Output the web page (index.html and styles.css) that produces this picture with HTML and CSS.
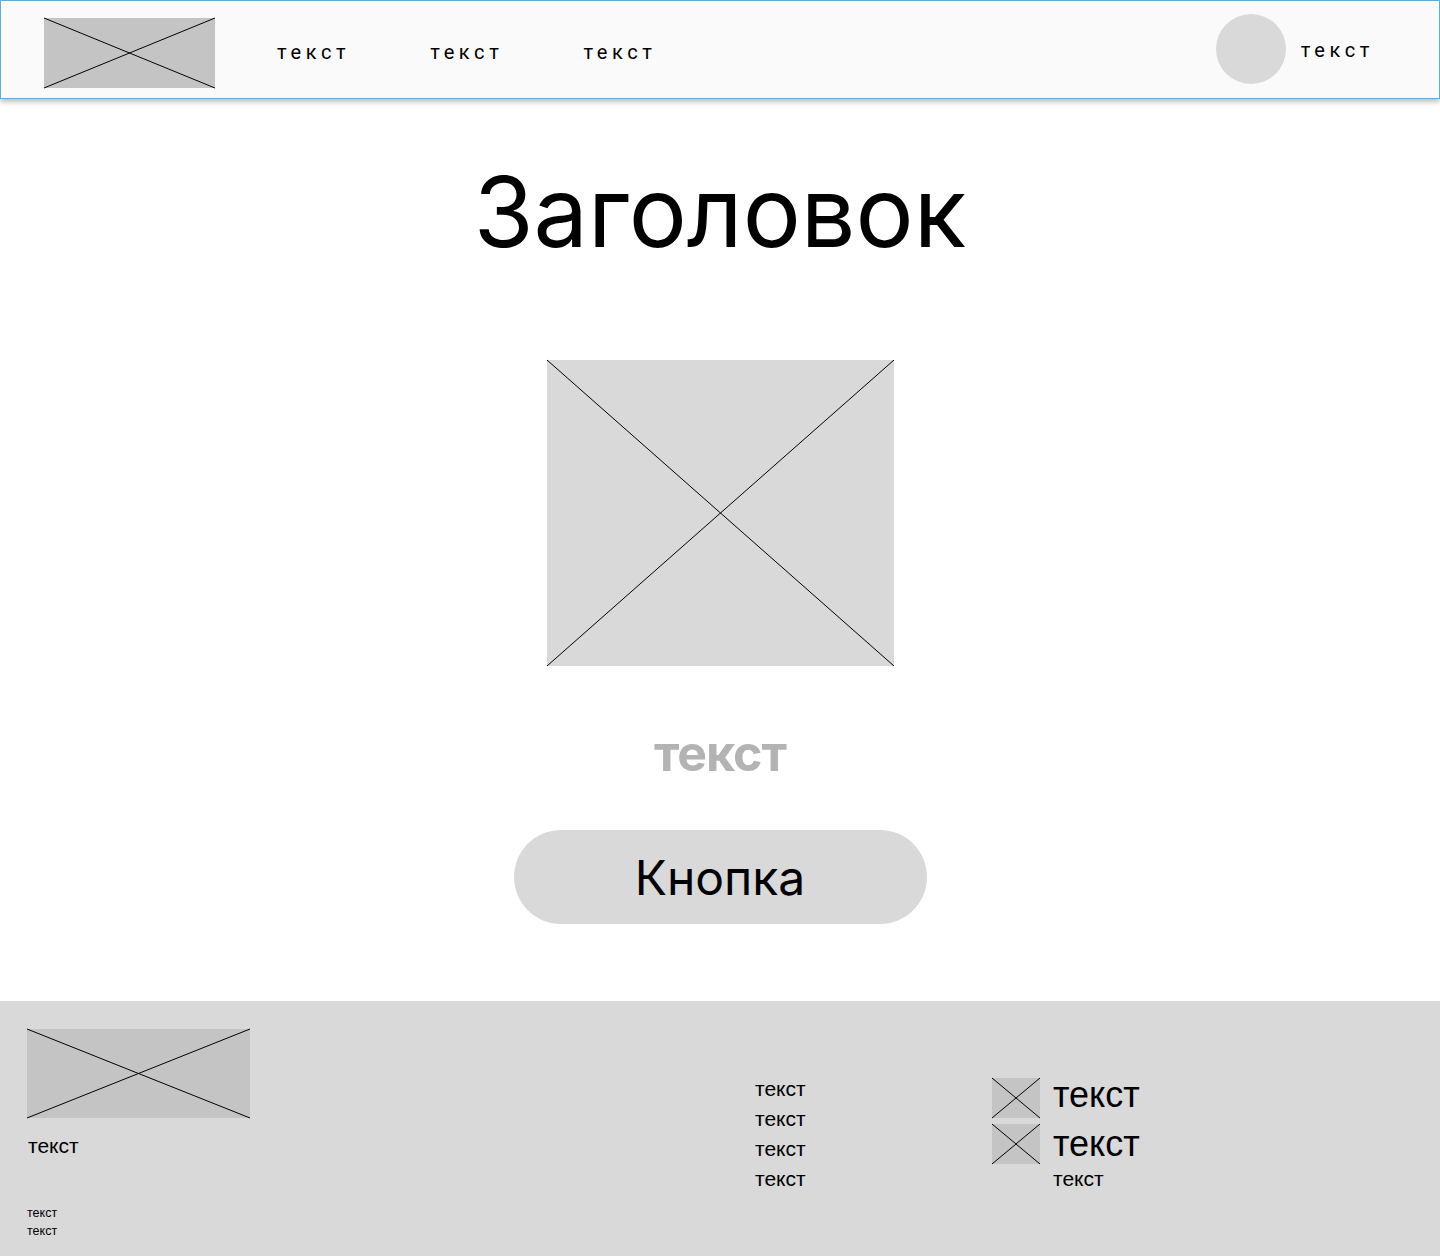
FILE: index.html
```html
<!DOCTYPE html>
<html lang="ru">
<head>
<meta charset="utf-8">
<title>Wireframe</title>
<link rel="stylesheet" href="styles.css">
</head>
<body>
<header class="topbar">
  <div class="ph ph-logo">
    <svg viewBox="0 0 100 100" preserveAspectRatio="none"><line x1="0" y1="0" x2="100" y2="100"/><line x1="0" y1="100" x2="100" y2="0"/></svg>
  </div>
  <nav class="nav">
    <a class="nav-link">текст</a>
    <a class="nav-link">текст</a>
    <a class="nav-link">текст</a>
  </nav>
  <div class="user">
    <span class="avatar"></span>
    <span class="user-name">текст</span>
  </div>
</header>

<main class="hero">
  <h1 class="hero-title">Заголовок</h1>
  <div class="ph ph-image">
    <svg viewBox="0 0 100 100" preserveAspectRatio="none"><line x1="0" y1="0" x2="100" y2="100"/><line x1="0" y1="100" x2="100" y2="0"/></svg>
  </div>
  <p class="hero-sub">текст</p>
  <button class="btn">Кнопка</button>
</main>

<footer class="footer">
  <div class="footer-brand">
    <div class="ph ph-flogo">
      <svg viewBox="0 0 100 100" preserveAspectRatio="none"><line x1="0" y1="0" x2="100" y2="100"/><line x1="0" y1="100" x2="100" y2="0"/></svg>
    </div>
    <p class="footer-tag">текст</p>
    <div class="footer-small">
      <span>текст</span>
      <span>текст</span>
    </div>
  </div>
  <ul class="footer-links">
    <li>текст</li>
    <li>текст</li>
    <li>текст</li>
    <li>текст</li>
  </ul>
  <div class="footer-contacts">
    <div class="contact contact-first">
      <div class="ph ph-icon">
        <svg viewBox="0 0 100 100" preserveAspectRatio="none"><line x1="0" y1="0" x2="100" y2="100"/><line x1="0" y1="100" x2="100" y2="0"/></svg>
      </div>
      <span class="contact-text">текст</span>
    </div>
    <div class="contact">
      <div class="ph ph-icon">
        <svg viewBox="0 0 100 100" preserveAspectRatio="none"><line x1="0" y1="0" x2="100" y2="100"/><line x1="0" y1="100" x2="100" y2="0"/></svg>
      </div>
      <span class="contact-text">текст</span>
    </div>
    <span class="contact-note">текст</span>
  </div>
</footer>
</body>
</html>
```

FILE: styles.css
```css
* { box-sizing: border-box; }

html, body {
  margin: 0;
  padding: 0;
  background: #ffffff;
  color: #000000;
  font-family: Inter, "Liberation Sans", sans-serif;
}

body {
  width: 1440px;
  min-height: 1256px;
  display: flex;
  flex-direction: column;
}

/* placeholder boxes */
.ph {
  position: relative;
  flex: none;
}
.ph svg {
  display: block;
  width: 100%;
  height: 100%;
  overflow: visible;
}
.ph line {
  stroke: #000;
  stroke-width: 1;
  vector-effect: non-scaling-stroke;
}

/* header */
.topbar {
  height: 99px;
  display: flex;
  align-items: flex-start;
  padding: 0 65px 0 43px;
  background: #fafafa;
  border: 1px solid #5eaecf;
  box-shadow: 0 3px 5px rgba(0, 0, 0, 0.25);
  position: relative;
  z-index: 1;
}
.ph-logo {
  margin-top: 17px;
  width: 171px;
  height: 70px;
  background: #c4c4c4;
}
.nav {
  display: flex;
  gap: 80px;
  margin-left: 62px;
  margin-top: 39px;
}
.nav-link,
.user-name {
  font-family: Roboto, "Liberation Sans", sans-serif;
  font-size: 20px;
  line-height: normal;
  letter-spacing: 4.6px;
  color: #000;
}
.user {
  margin-left: auto;
  display: flex;
  align-items: flex-start;
  gap: 15px;
}
.avatar {
  margin-top: 13px;
  width: 70px;
  height: 70px;
  border-radius: 50%;
  background: #d9d9d9;
}
.user-name {
  margin-top: 37px;
}

/* hero */
.hero {
  flex: 1;
  display: flex;
  flex-direction: column;
  align-items: center;
}
.hero-title {
  margin: 55px 0 0;
  font-weight: 400;
  font-size: 97px;
  line-height: 116px;
  letter-spacing: 0;
}
.ph-image {
  margin-top: 90px;
  width: 347px;
  height: 306px;
  background: #d9d9d9;
}
.hero-sub {
  margin: 56px 0 0;
  font-weight: 700;
  font-size: 50px;
  line-height: 62px;
  letter-spacing: -1px;
  color: #b3b3b3;
}
.btn {
  margin-top: 46px;
  width: 413px;
  height: 94px;
  border: none;
  border-radius: 47px;
  background: #d9d9d9;
  font-family: Inter, "Liberation Sans", sans-serif;
  font-size: 48px;
  color: #000;
  padding: 0;
}

/* footer */
.footer {
  height: 255px;
  background: #d9d9d9;
  display: flex;
  padding: 28px 0 0 27px;
}
.footer-brand {
  width: 728px;
  display: flex;
  flex-direction: column;
}
.ph-flogo {
  width: 223px;
  height: 89px;
  background: #c4c4c4;
}
.footer-tag {
  margin: 16px 0 0 1px;
  font-family: "Liberation Sans", Arial, sans-serif;
  font-size: 21px;
  line-height: 24px;
}
.footer-small {
  margin-top: 46px;
  display: flex;
  flex-direction: column;
  font-family: "Liberation Sans", Arial, sans-serif;
  font-size: 12.5px;
  line-height: 18px;
}
.footer-links {
  list-style: none;
  margin: 45px 0 0;
  padding: 0;
  width: 237px;
  font-family: "Liberation Sans", Arial, sans-serif;
  font-size: 21px;
  line-height: 30px;
}
.footer-contacts {
  margin-top: 46px;
  display: flex;
  flex-direction: column;
}
.contact {
  display: flex;
  align-items: center;
  gap: 13px;
  height: 46px;
}
.contact-first .contact-text {
  margin-top: -6px;
}
.ph-icon {
  width: 48px;
  height: 40px;
  background: #c4c4c4;
}
.contact-text {
  font-family: "Liberation Sans", Arial, sans-serif;
  font-size: 36px;
  line-height: 40px;
}
.contact-note {
  margin: 0 0 0 61px;
  font-family: "Liberation Sans", Arial, sans-serif;
  font-size: 21px;
  line-height: 24px;
}
```
